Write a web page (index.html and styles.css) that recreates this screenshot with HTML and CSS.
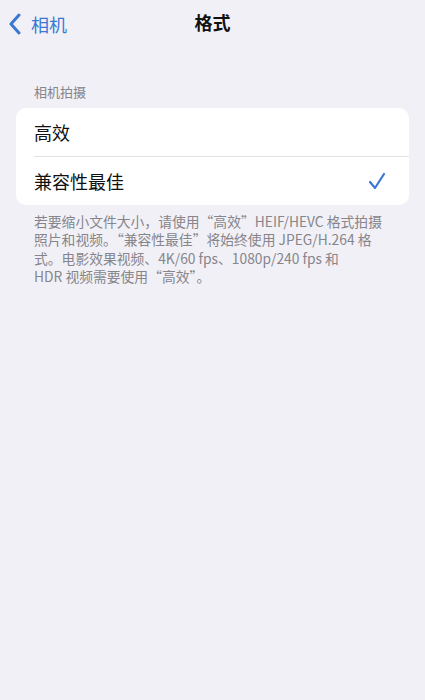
FILE: index.html
```html
<!DOCTYPE html>
<html lang="zh-CN">
<head>
    <meta charset="UTF-8">
    <meta name="viewport" content="width=device-width, initial-scale=1.0">
    <title>格式</title>
    <link rel="stylesheet" href="styles.css">
</head>
<body>

<!-- Navigation bar -->
<div class="nav-bar">
    <a class="back-link" href="#">
        <svg class="chevron" width="13" height="22" viewBox="0 0 13 22">
            <path d="M11 2 L3 11 L11 20" fill="none" stroke="currentColor" stroke-width="3" stroke-linecap="round" stroke-linejoin="round"/>
        </svg>
        <span>相机</span>
    </a>
    <h1 class="nav-title">格式</h1>
</div>

<!-- Camera capture section -->
<div class="section">
    <div class="section-header">相机拍摄</div>
    <div class="group">
        <div class="row">
            <span class="row-label">高效</span>
        </div>
        <div class="row">
            <span class="row-label">兼容性最佳</span>
            <svg class="check" width="18" height="18" viewBox="0 0 18 18">
                <path d="M2 10 L7 16 L16 2" fill="none" stroke="currentColor" stroke-width="2.2" stroke-linecap="round" stroke-linejoin="round"/>
            </svg>
        </div>
    </div>
    <p class="section-footer">
        若要缩小文件大小，请使用“高效”HEIF/HEVC 格式拍摄<br>
        照片和视频。“兼容性最佳”将始终使用 JPEG/H.264 格<br>
        式。电影效果视频、4K/60 fps、1080p/240 fps 和<br>
        HDR 视频需要使用“高效”。
    </p>
</div>

</body>
</html>
```

FILE: styles.css
```css
/* General */
body {
    margin: 0;
    padding: 0;
    background-color: #f1f0f6;
    font-family: "Noto Sans CJK SC", "Noto Sans", sans-serif;
    color: #111;
    height: 700px;
}

/* Navigation bar */
.nav-bar {
    position: relative;
    height: 44px;
    display: flex;
    align-items: center;
    justify-content: center;
}

.back-link {
    position: absolute;
    left: 8px;
    top: 11px;
    display: flex;
    align-items: center;
    gap: 10px;
    color: #3b78d4;
    text-decoration: none;
    font-size: 18px;
}

.chevron {
    display: block;
}

.nav-title {
    margin: 0;
    font-size: 18px;
    font-weight: bold;
    color: #111;
}

/* Section */
.section {
    padding: 39px 16px 0;
}

.section-header {
    padding-left: 18px;
    font-size: 13px;
    color: #86858b;
    line-height: 18px;
    margin-bottom: 7px;
}

.group {
    background: white;
    border-radius: 10px;
    overflow: hidden;
}

.row {
    height: 48px;
    display: flex;
    align-items: center;
    justify-content: space-between;
    margin-left: 18px;
    padding-right: 23px;
    font-size: 18px;
}

.row + .row {
    border-top: 1px solid #e3e3e7;
}

.check {
    color: #3b78d4;
}

.section-footer {
    margin: 7px 0 0;
    padding-left: 18px;
    font-size: 13.8px;
    line-height: 18.4px;
    color: #86858b;
}
```
